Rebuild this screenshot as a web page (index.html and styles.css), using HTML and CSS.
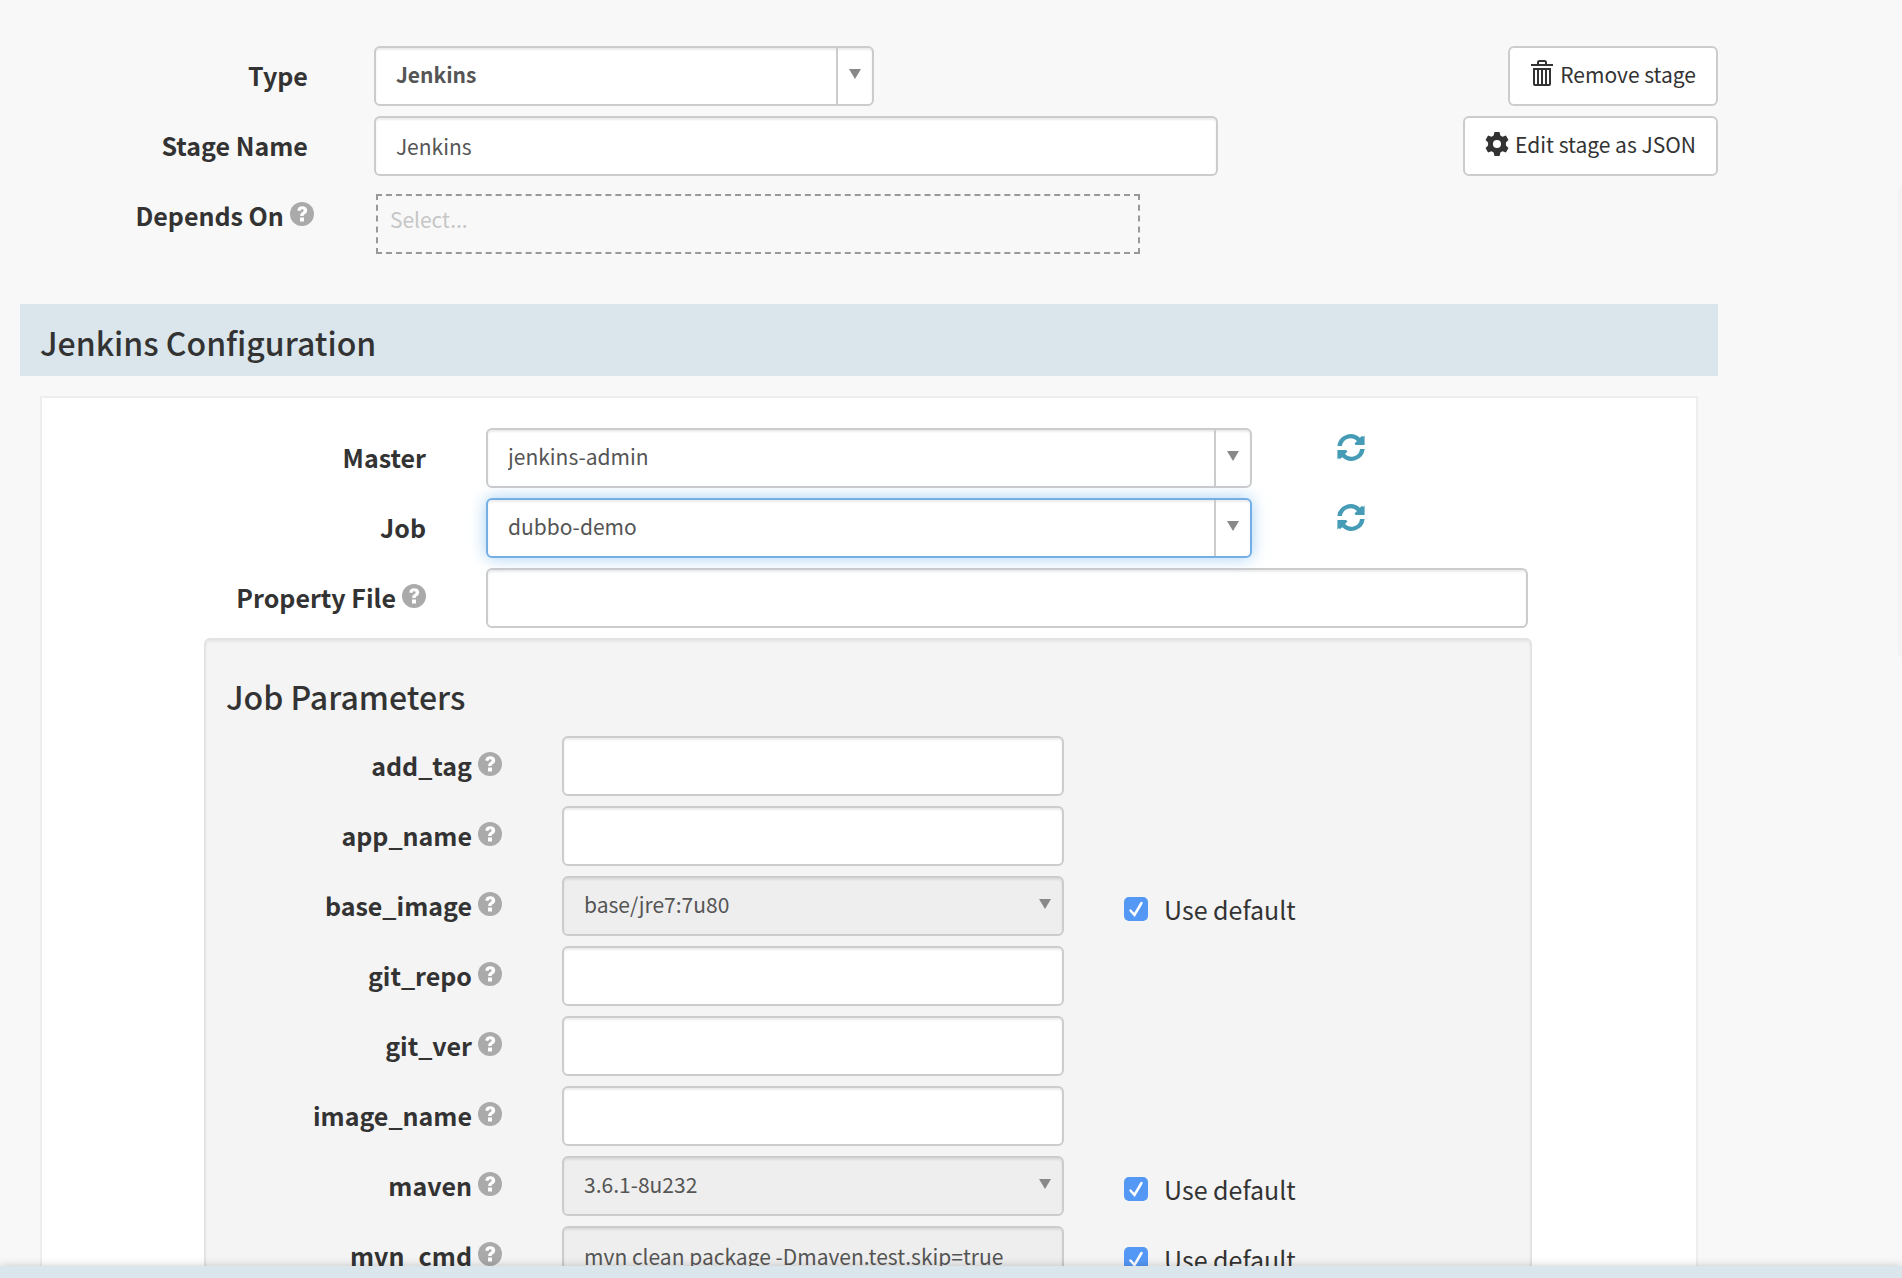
FILE: index.html
```html
<!DOCTYPE html>
<html lang="en">
<head>
<meta charset="utf-8">
<title>Jenkins stage</title>
<link rel="stylesheet" href="styles.css">
</head>
<body>
<svg class="sprite" aria-hidden="true">
  <symbol id="i-help" viewBox="0 0 24 24">
    <circle cx="12" cy="12" r="12" fill="#aaa"/>
    <path d="M7.300 8.600C7.500 5.800 9.300 4.300 12.200 4.300c3 0 5 1.600 5 4.100 0 2-1.200 3-2.500 3.800-.8.500-1.100.9-1.100 1.900H10.200c0-2 .5-3 1.900-3.900 1-.6 1.500-1 1.500-1.700 0-.7-.5-1.200-1.400-1.200-1 0-1.600.5-1.800 1.600z" fill="#fff"/>
    <rect x="10" y="15.500" width="4" height="4" fill="#fff"/>
  </symbol>
  <symbol id="i-refresh" viewBox="0 0 28 27">
    <path id="refresh-half" d="M.3 12A13.500 13.500 0 0 1 22.800 3.700L25.200 1.700 26 3 27.600 1.500V11H19Q17 10 18 9L20 7A8.700 8.700 0 0 0 5 12z"/>
    <use href="#refresh-half" transform="rotate(180 14 13.500)"/>
  </symbol>
</svg>

<main class="stage">
  <form class="content">
    <section class="summary">
      <div class="summary-fields">
        <div class="row">
          <label class="label" for="type">Type</label>
          <div class="select type-select split">
            <select id="type" class="strong"><option>Jenkins</option></select>
          </div>
        </div>
        <div class="row">
          <label class="label" for="name">Stage Name</label>
          <input class="field" id="name" type="text" value="Jenkins">
        </div>
        <div class="row">
          <label class="label hang" for="depends">Depends On<svg class="help"><use href="#i-help"/></svg></label>
          <input class="depends" id="depends" type="text" placeholder="Select...">
        </div>
      </div>
      <div class="actions">
        <button class="btn" type="button">
          <svg class="trash" viewBox="0 0 24 28" fill="none" stroke="#333" stroke-width="2">
            <path d="M1 6h22M8 6V3.500Q8 2 9.500 2h5Q16 2 16 3.500V6M4 9v16q0 1 1 1h14q1 0 1-1V9M4 10h16M8 10v16M12 10v16M16 10v16"/>
          </svg>Remove stage</button>
        <button class="btn" type="button">
          <svg class="gear" viewBox="1 2 22 22">
            <path fill="#333" fill-rule="evenodd" d="M9.700 2h4.600l.8 3.200 1.900 1.100 3.200-1 2.300 4-2.300 2.300v2.800l2.300 2.300-2.300 4-3.200-1-1.900 1.100-.8 3.200H9.700l-.8-3.200L7 19.700l-3.200 1-2.300-4 2.300-2.300v-2.800L1.500 9.300l2.300-4 3.200 1 1.900-1.100zM12 9.300a3.700 3.700 0 1 0 0 7.400 3.700 3.700 0 0 0 0-7.400z"/>
          </svg>Edit stage as JSON</button>
      </div>
    </section>

    <h2 class="section-title">Jenkins Configuration</h2>

    <section class="panel">
      <div class="row">
        <label class="label" for="master">Master</label>
        <div class="select split"><select id="master"><option>jenkins-admin</option></select></div>
        <button class="refresh" type="button" aria-label="Refresh masters"><svg><use href="#i-refresh"/></svg></button>
      </div>
      <div class="row">
        <label class="label" for="job">Job</label>
        <div class="select split focused"><select id="job"><option>dubbo-demo</option></select></div>
        <button class="refresh" type="button" aria-label="Refresh jobs"><svg><use href="#i-refresh"/></svg></button>
      </div>
      <div class="row">
        <label class="label" for="property">Property File<svg class="help"><use href="#i-help"/></svg></label>
        <input class="field wide" id="property" type="text">
      </div>

      <div class="well">
        <h3 class="well-title">Job Parameters</h3>
        <div class="row">
          <label class="label" for="add_tag">add_tag<svg class="help"><use href="#i-help"/></svg></label>
          <input class="field" id="add_tag" type="text">
        </div>
        <div class="row">
          <label class="label" for="app_name">app_name<svg class="help"><use href="#i-help"/></svg></label>
          <input class="field" id="app_name" type="text">
        </div>
        <div class="row">
          <label class="label" for="base_image">base_image<svg class="help"><use href="#i-help"/></svg></label>
          <div class="select"><select id="base_image" disabled><option>base/jre7:7u80</option></select></div>
          <label class="default"><input type="checkbox" checked>Use default</label>
        </div>
        <div class="row">
          <label class="label" for="git_repo">git_repo<svg class="help"><use href="#i-help"/></svg></label>
          <input class="field" id="git_repo" type="text">
        </div>
        <div class="row">
          <label class="label" for="git_ver">git_ver<svg class="help"><use href="#i-help"/></svg></label>
          <input class="field" id="git_ver" type="text">
        </div>
        <div class="row">
          <label class="label" for="image_name">image_name<svg class="help"><use href="#i-help"/></svg></label>
          <input class="field" id="image_name" type="text">
        </div>
        <div class="row">
          <label class="label" for="maven">maven<svg class="help"><use href="#i-help"/></svg></label>
          <div class="select"><select id="maven" disabled><option>3.6.1-8u232</option></select></div>
          <label class="default"><input type="checkbox" checked>Use default</label>
        </div>
        <div class="row">
          <label class="label" for="mvn_cmd">mvn_cmd<svg class="help"><use href="#i-help"/></svg></label>
          <input class="field" id="mvn_cmd" type="text" disabled value="mvn clean package -Dmaven.test.skip=true">
          <label class="default"><input type="checkbox" checked>Use default</label>
        </div>
      </div>
    </section>
  </form>
  <div class="scroll-thumb"></div>
</main>
<footer class="footer"></footer>
</body>
</html>
```

FILE: styles.css
```css
* { box-sizing: border-box; }

body {
  margin: 0;
  height: 100vh;
  display: flex;
  flex-direction: column;
  overflow: hidden;
  background: #f8f8f8;
  color: #333;
  font: 25px/36px "Noto Sans CJK SC", "Open Sans", sans-serif;
}

input, select, button { font: inherit; color: inherit; margin: 0; }

.sprite { display: none; }

.stage {
  position: relative;
  flex: 1;
  min-height: 0;
  overflow: hidden;
}

.content { padding: 46px 184px 0 20px; }

.scroll-thumb {
  position: absolute;
  top: 187px;
  right: 0;
  width: 4px;
  height: 470px;
  border-radius: 4px 0 0 4px;
  background: #f3f3f3;
}

.footer {
  position: relative;
  height: 12px;
  background: #dae6eb;
  box-shadow: 0 0 10px rgba(0, 0, 0, .2);
}

/* Rows */
.row {
  display: grid;
  align-items: start;
  min-height: 60px;
  margin-bottom: 10px;
}

.label {
  display: flex;
  justify-content: flex-end;
  gap: 6px;
  padding-top: 11px;
  font-weight: 700;
  white-space: nowrap;
}

.label.hang { margin-right: -6px; }

.help {
  width: 24px;
  height: 24px;
  margin-top: 5px;
  flex: none;
}

/* Controls */
.field,
.select {
  width: 100%;
  height: 60px;
  border: 2px solid #ccc;
  border-radius: 6px;
  background: #fff;
  box-shadow: inset 0 2px 2px rgba(0, 0, 0, .075);
  font-size: 21px;
  color: #555;
}

.field { padding: 0 20px; }

.field:disabled,
.select:has(:disabled) { background: #eee; }

.select {
  position: relative;
  display: flex;
}

.select select {
  flex: 1;
  min-width: 0;
  padding: 0 50px 4px 20px;
  border: 0;
  outline: 0;
  background: none;
  appearance: none;
  opacity: 1;
}

.select .strong { font-weight: 700; }

/* Arrow drawn over the native control */
.select::after {
  content: "";
  position: absolute;
  top: 21px;
  right: 11px;
  border: 6px solid transparent;
  border-top: 10px solid #888;
  border-bottom: 0;
  pointer-events: none;
}

.select.split::before {
  content: "";
  position: absolute;
  inset: 0 34px 0 auto;
  border-right: 2px solid #ccc;
}

.select.focused {
  border-color: #74aee4;
  box-shadow: inset 0 2px 2px rgba(0, 0, 0, .075), 0 0 16px rgba(102, 175, 233, .6);
}

.depends {
  width: 100%;
  height: 60px;
  padding: 0 12px 10px;
  border: 2px dashed #999;
  background: none;
  font-size: 21px;
}

.depends::placeholder { color: #c6c6c6; opacity: 1; }

.btn {
  display: flex;
  align-items: center;
  gap: 6px;
  height: 60px;
  padding: 0 20px 4px;
  border: 2px solid #ccc;
  border-radius: 6px;
  background: #fff;
  font-size: 21px;
  white-space: nowrap;
}

.trash { width: 24px; height: 28px; margin-bottom: 2px; }

.gear { width: 24px; height: 24px; }

.refresh {
  grid-column: 4;
  justify-self: start;
  padding: 6px 0 0;
  border: 0;
  background: none;
  line-height: 0;
}

.refresh svg { width: 28px; height: 27px; fill: #469cb6; }

.default {
  display: flex;
  align-items: center;
  gap: 16px;
  height: 60px;
  padding-top: 6px;
}

.default input {
  appearance: none;
  width: 24px;
  height: 24px;
  border-radius: 5px;
  background: #5498f6 url("data:image/svg+xml,%3Csvg xmlns='http://www.w3.org/2000/svg' viewBox='0 0 24 24'%3E%3Cpath d='M6.500 13.500l4 4.500 7-12' fill='none' stroke='%23fff' stroke-width='2.500' stroke-linecap='round'/%3E%3C/svg%3E");
}

/* Stage summary */
.summary { display: flex; justify-content: space-between; }

.summary-fields { flex: 0 0 72%; }

.summary-fields .row {
  grid-template-columns: 288fr 844fr;
  column-gap: 66px;
  margin-right: 25px;
}

.type-select { width: 500px; max-width: 100%; }

.summary-fields .depends { width: calc(100% - 80px); margin: 8px 0 0 2px; }

.actions {
  display: flex;
  flex-direction: column;
  align-items: flex-end;
  gap: 10px;
}

/* Configuration */
.section-title {
  margin: 40px 0 20px;
  padding: 14px 20px 10px;
  background: #dae6eb;
  font-size: 32px;
  line-height: 48px;
  font-weight: 500;
}

.panel {
  margin: 0 20px;
  padding: 30px 0;
  border: 2px solid #eee;
  background: #fff;
}

.panel > .row { grid-template-columns: 384fr 826fr 85fr 191fr 168fr; }

.panel > .row > .select,
.panel > .row > .field {
  width: calc(100% - 60px);
  margin-left: 60px;
}

.panel > .row > .wide { grid-column: 2 / 5; }

.well {
  margin: 0 164px 0 162px;
  padding: 32px 0 20px;
  border: 2px solid #e3e3e3;
  border-radius: 6px;
  background: #f4f4f4;
  box-shadow: inset 0 2px 2px rgba(0, 0, 0, .05);
}

.well-title {
  margin: 0 20px 16px;
  font-size: 32px;
  line-height: 48px;
  font-weight: 500;
}

.well .row {
  grid-template-columns: 296fr 502fr 406fr;
  column-gap: 60px;
}
```
